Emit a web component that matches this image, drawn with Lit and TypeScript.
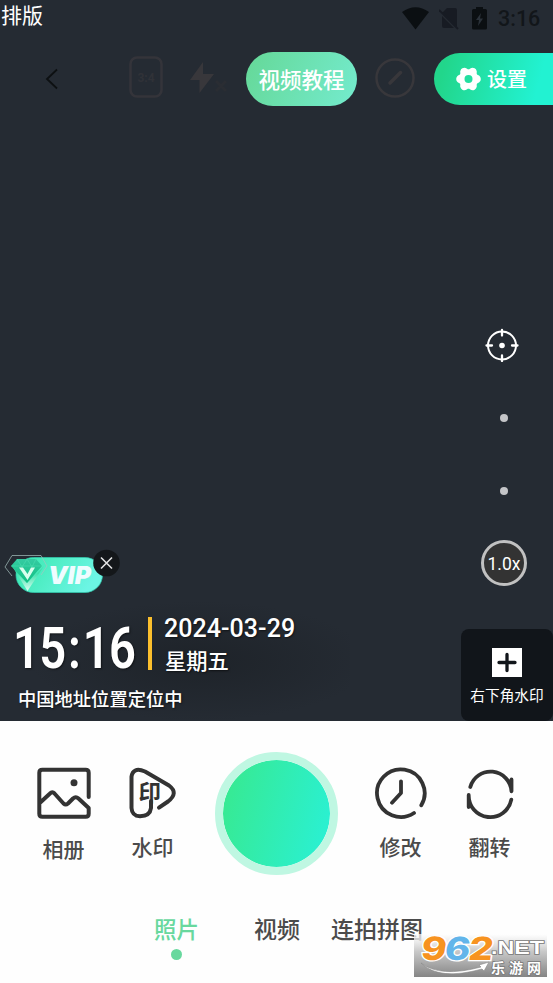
import { LitElement, html, css, svg } from "lit";
import { customElement } from "lit/decorators.js";

@customElement("status-bar")
class StatusBar extends LitElement {
  static styles = css`
    :host { display: flex; height: 52px; flex: none; box-sizing: border-box; align-items: flex-start; }
    .title { font-size: 21px; line-height: 30px; color: #fff; flex: 1; margin-top: -1px; padding-left: 1px; }
    .icons { display: flex; padding: 7px 0 0; }
    .wifi { margin-right: 10px; }
    .sim { margin-right: 13px; }
    .time { font: 500 21.5px/24px Roboto, sans-serif; color: #12161a; margin-left: 11px; width: 55px; }
  `;
  render() {
    return html`
      <div class="title">排版</div>
      <div class="icons">
        <svg class="wifi" width="27" height="23" viewBox="0 0 27 23"><path d="M0 5Q13.500-4.500 27 5L13.500 22.500Z" fill="#0b0f12" /></svg>
        <svg class="sim" width="20" height="23" viewBox="0 0 20 23">
          <path d="M3 6L8 1H16Q18 1 18 3V20L3 5ZM3 9L15 21H5Q3 21 3 19Z" fill="#171b23" />
          <path d="M0 3L19 22" stroke="#171b23" stroke-width="1.800" />
        </svg>
        <svg width="15" height="23" viewBox="0 0 15 23">
          <path d="M4 2V0H11V2H13.500Q15 2 15 3.500V21Q15 22.500 13.500 22.500H1.500Q0 22.500 0 21V3.500Q0 2 1.500 2Z" fill="#0b0f12" />
          <path d="M9 6L4 13H7L6 19L11 11.500H8Z" fill="#2b323a" />
        </svg>
        <div class="time">3:16</div>
      </div>
    `;
  }
}

@customElement("tool-bar")
class ToolBar extends LitElement {
  static styles = css`
    :host { display: flex; height: 54px; flex: none; align-items: center; }
    svg { flex: none; }
    .back { margin-left: 45px; }
    .ratio { margin: 0 0 4px 71px; }
    .flash { margin: 0 0 2px 27px; }
    .tutorial { flex: none; margin-left: 17px; width: 111px; height: 54px; border-radius: 27px; background: linear-gradient(115deg, #65d897, #74ebce); color: #fff; font-weight: 500; font-size: 21.500px; line-height: 54px; text-align: center; }
    .compass { margin: 0 0 3px 18px; }
    .settings { flex: none; margin-left: 19px; width: 119px; height: 52px; border-radius: 26px 0 0 26px; background: linear-gradient(105deg, #22d68b 10%, #22f2d2 85%); display: flex; align-items: center; color: #fff; font-size: 20px; font-weight: 500; line-height: 52px; }
    .gear { margin: 0 6px 0 22px; }
  `;
  render() {
    const petals = [0, 60, 120, 180, 240, 300];
    return html`
      <svg class="back" width="13" height="22" viewBox="0 0 13 22"><path d="M12 1.500L2 11L12 20.500" fill="none" stroke="#0d1012" stroke-width="1.800" /></svg>
      <svg class="ratio" width="34" height="42" viewBox="0 0 34 42">
        <rect x="1.500" y="1.500" width="31" height="39" rx="6.500" fill="none" stroke="#34343a" stroke-width="2.600" />
        <text x="17" y="26" text-anchor="middle" font-family="Roboto" font-weight="700" font-size="12" fill="#303238">3:4</text>
      </svg>
      <svg class="flash" width="39" height="32" viewBox="0 0 39 32">
        <path d="M13 0L0 18H9.500V31L24 12H13Z" fill="#38373b" />
        <path d="M26 19L36 29M36 19L26 29" stroke="#2a2d33" stroke-width="3" />
      </svg>
      <div class="tutorial">视频教程</div>
      <svg class="compass" width="40" height="40" viewBox="0 0 40 40">
        <circle cx="20" cy="20" r="18.500" fill="none" stroke="#38373b" stroke-width="2.500" />
        <path d="M15 25L25.500 14.500" stroke="#38373b" stroke-width="3.500" stroke-linecap="round" />
      </svg>
      <div class="settings">
        <svg class="gear" width="25" height="24" viewBox="-12.500 -12 25 24">
          <g fill="#fff">
            <circle r="9.800" />
            ${petals.map((a) => svg`<circle cx="8" r="4.300" transform=${`rotate(${a})`} />`)}
          </g>
          <circle r="4" fill="#22dfa0" />
        </svg>
        <span>设置</span>
      </div>
    `;
  }
}

@customElement("vip-badge")
class VipBadge extends LitElement {
  static styles = css`:host { display: block; height: 46px; } svg { display: block; }`;
  render() {
    return html`
      <svg width="122" height="46" viewBox="0 0 122 46">
        <defs>
          <linearGradient id="pill" x2="1" y2="0.300"><stop offset="0" stop-color="#38e8ac" /><stop offset="1" stop-color="#6cf5e4" /></linearGradient>
          <linearGradient id="gem" x2="0" y2="1"><stop offset="0" stop-color="#35cba2" /><stop offset="1" stop-color="#0fc082" /></linearGradient>
          <linearGradient id="tip" x2="0" y2="1"><stop offset="0.300" stop-color="#3fe0ac" /><stop offset="1" stop-color="#dcfff2" /></linearGradient>
        </defs>
        <rect x="16" y="8.500" width="86.500" height="35" rx="17.500" fill="url(#pill)" stroke="#31cdb0" stroke-width="0.700" />
        <path d="M12 17L27 34L44 17L27.500 42Z" fill="url(#tip)" />
        <path d="M17 10H36L42 17L27 34L11 17Z" fill="url(#gem)" />
        <path d="M17 10L22 18L27 10L32 18L36 10M11 17H42" stroke="#55e5b8" stroke-width="1" opacity="0.450" fill="none" />
        <path d="M12 6.500H41L47 17L41 26M12 6.500L5 18L12 27" stroke="#a8c3c0" stroke-width="0.700" fill="none" />
        <path d="M19 18.500H23L27.500 25L31 18.500H35L27.500 31Z" fill="#d8ffee" />
        <text x="48" y="34.500" font-family="Inter, sans-serif" font-size="24" font-weight="900" font-style="italic" textLength="43" lengthAdjust="spacingAndGlyphs" fill="#effcff">VIP</text>
        <circle cx="106.500" cy="14" r="13.300" fill="#14171a" />
        <path d="M101 8.500L112 19.500M112 8.500L101 19.500" stroke="#e3e3e3" stroke-width="1.600" />
      </svg>
    `;
  }
}

@customElement("time-mark")
class TimeMark extends LitElement {
  static styles = css`
    :host { display: block; color: #fff; text-shadow: 1px 1px 2px #0008; }
    .row { display: flex; height: 61px; }
    .bar { width: 4px; height: 53px; margin: 1px 12px 0 1px; background: #fbbf2d; }
    .date { font: 500 25px/26px Roboto, sans-serif; letter-spacing: 0.050px; }
    .day { font-size: 21.300px; line-height: 30px; padding: 3px 0 0 1px; font-weight: 500; }
    .place { font-size: 18.300px; line-height: 24px; padding: 9px 0 0 18px; font-weight: 500; }
    .clock { overflow: visible; }
  `;
  render() {
    return html`
      <div class="row">
        <svg class="clock" width="147" height="61" viewBox="0 0 147 61">
          <g transform="scale(0.820 1)" font-family="Roboto, sans-serif" font-size="57.500" font-weight="600" fill="#fff">
            <text x="16 48 83 101 133" y="51.500">15:16</text>
          </g>
        </svg>
        <div class="bar"></div>
        <div>
          <div class="date">2024-03-29</div>
          <div class="day">星期五</div>
        </div>
      </div>
      <div class="place">中国地址位置定位中</div>
    `;
  }
}

@customElement("side-tools")
class SideTools extends LitElement {
  static styles = css`
    :host { display: flex; flex-direction: column; align-items: flex-end; width: 92px; }
    svg { display: block; }
    .target { margin: 222px 34px 0 0; }
    .dot { width: 8px; height: 8px; border-radius: 50%; background: #c4c5c8; margin: 52px 45.500px 0 0; }
    .dot + .dot { margin-top: 65px; }
    .zoom { width: 40px; height: 40px; border: 3px solid #c1c1c1; border-radius: 50%; background: #333; color: #fff; font: 17.500px/42px Roboto, sans-serif; text-align: center; margin: 45px 26px 0 0; }
    .corner { width: 92px; height: 92px; margin-top: 43px; border-radius: 8px; background: #11151a; display: flex; flex-direction: column; align-items: center; color: #fff; font-size: 14.700px; line-height: 20px; }
    .plus { margin: 19px 0 8px; }
  `;
  render() {
    return html`
      <svg class="target" width="34" height="34" viewBox="0 0 34 34">
        <circle cx="17" cy="17.500" r="14" stroke="#fff" stroke-width="2" fill="none" />
        <path d="M17 2V7.500M17 27.500V33M1.500 17.500H7M27 17.500H32.500" stroke="#fff" stroke-width="2.300" stroke-linecap="round" />
        <circle cx="17" cy="17.500" r="2.800" fill="#fff" />
      </svg>
      <div class="dot"></div>
      <div class="dot"></div>
      <div class="zoom">1.0x</div>
      <div class="corner">
        <svg class="plus" width="30" height="29" viewBox="0 0 30 29">
          <rect width="30" height="29" fill="#fff" />
          <path d="M15 6.500V22.500M7 14.500H23" stroke="#11151a" stroke-width="3.300" stroke-linecap="round" />
        </svg>
        右下角水印
      </div>
    `;
  }
}

@customElement("site-logo")
class SiteLogo extends LitElement {
  static styles = css`:host { display: block; } svg { display: block; overflow: visible; }`;
  render() {
    return html`
      <svg width="133" height="43" viewBox="0 0 133 43">
        <defs>
          <linearGradient id="plate" x2="0" y2="1"><stop offset="0" stop-color="#fff" stop-opacity="0.700" /><stop offset="0.400" stop-color="#c9c9c9" /><stop offset="1" stop-color="#858585" /></linearGradient>
        </defs>
        <rect width="133" height="43" fill="url(#plate)" />
        <g transform="translate(6 26) skewX(-8) scale(1.200 1)" font-family="Inter, sans-serif" font-weight="800" font-size="32" fill="#f79320" stroke="#fff" stroke-width="2.500" paint-order="stroke">
          <text x="0" y="0">9</text>
          <text x="19.500" y="0" fill="#62b5ea">6</text>
          <text x="39.500" y="0">2</text>
        </g>
        <text x="77" y="20" font-family="Liberation Sans, sans-serif" font-weight="700" font-size="18" textLength="53" lengthAdjust="spacingAndGlyphs" fill="#fff" stroke="#777" stroke-width="1.500" paint-order="stroke">.NET</text>
        <path d="M7 29Q26 44 67 33L65 31L75 28L70 37L68 35Q25 47 7 29Z" fill="#fff" stroke="#888" stroke-width="0.600" />
        <text x="77" y="38.500" font-family="Noto Sans CJK SC, sans-serif" font-weight="700" font-size="14" textLength="50" fill="#fff" stroke="#777" stroke-width="1.500" paint-order="stroke">乐游网</text>
      </svg>
    `;
  }
}

@customElement("app-root")
class AppRoot extends LitElement {
  static styles = css`
    :host { display: flex; flex-direction: column; width: 553px; height: 983px; overflow: hidden; background: #fefefe; font-family: "Noto Sans CJK SC", sans-serif; }
    svg { display: block; }
    .camera { height: 721px; flex: none; background: #252b33; display: flex; flex-direction: column; }
    .view { flex: 1; display: flex; justify-content: space-between; }
    .left { display: flex; flex-direction: column; justify-content: flex-end; width: 350px; background: radial-gradient(ellipse 170px 60px at 200px 555px, #1e2329, #252b3300); }
    .gap { height: 21px; }
    .place-gap { height: 11px; }
    .actions { display: grid; grid-template-columns: 89px 89px 159px 89px 89px; padding: 31px 0 0 19px; height: 123px; }
    .action { display: flex; flex-direction: column; align-items: center; padding-top: 14px; font-size: 21px; line-height: 28px; color: #4b4b4b; font-weight: 500; }
    .action svg { margin-bottom: 12px; }
    .action.low svg { margin-bottom: 14px; }
    .shutter { width: 107px; height: 107px; border: 8px solid #bff7e2; border-radius: 50%; background: linear-gradient(105deg, #38e98d, #29f1d8) padding-box; justify-self: center; }
    .tabs { display: flex; padding: 36px 0 0 154px; font-size: 23px; line-height: 34px; color: #4b4b4b; font-weight: 500; height: 71px; }
    .tab { display: flex; flex-direction: column; align-items: center; }
    .tab.on { color: #68d89e; font-size: 22.500px; }
    .tab.on::after { content: ""; width: 11px; height: 11px; border-radius: 50%; background: #68d89e; margin-top: 4px; }
    .tab:nth-child(2) { margin-left: 55px; }
    .tab:nth-child(3) { margin-left: 31px; }
    .logo { position: absolute; left: 414px; top: 934px; }
  `;
  render() {
    return html`
      <div class="camera">
        <status-bar></status-bar>
        <tool-bar></tool-bar>
        <div class="view">
          <div class="left">
            <vip-badge></vip-badge>
            <div class="gap"></div>
            <time-mark></time-mark>
            <div class="place-gap"></div>
          </div>
          <side-tools></side-tools>
        </div>
      </div>
      <div class="actions">
        <div class="action low">
          <svg width="56" height="54" viewBox="-1 -1 56 54" fill="none" stroke="#333" stroke-width="4" stroke-linecap="round" stroke-linejoin="round">
            <path d="M51.700 30V5.700Q51.700 2.700 48.700 2.700H5.300Q2.300 2.700 2.300 5.700V46.700Q2.300 49.700 5.300 49.700H48.700Q51.700 49.700 51.700 46.700V41L41.500 31.500Q38.700 29 36 31.500L31 36.500Q28.700 38.500 26.500 36.500L17.500 26.500Q15.300 24.200 13 26.500L3 35.700" />
            <circle cx="37" cy="15.700" r="3.500" fill="#333" stroke="none" />
          </svg>
          相册
        </div>
        <div class="action">
          <svg width="48" height="54" viewBox="0 -1 48 54" fill="none" stroke="#333" stroke-width="4" stroke-linecap="round" stroke-linejoin="round">
            <path d="M30 40.700L39 34.500Q50 26 40 18.500L16 4.500Q4 -0.500 2.500 9.700V41Q3 49 11 49.300Q21 49 22 41V34" />
            <text x="9.500" y="34" font-family="Noto Sans CJK SC, sans-serif" font-size="22.500" font-weight="700" fill="#333" stroke="none">印</text>
          </svg>
          水印
        </div>
        <div class="shutter"></div>
        <div class="action">
          <svg width="54" height="54" viewBox="-27 -27 54 54" fill="none" stroke="#333" stroke-width="3.800" stroke-linecap="round" stroke-linejoin="round">
            <path d="M20.300 12.300A23.800 23.800 0 1 0 13 20M0 -11.700V0L-9 9.700" />
          </svg>
          修改
        </div>
        <div class="action">
          <svg width="54" height="54" viewBox="-27 -27 54 54" fill="none" stroke="#333" stroke-width="3.800" stroke-linecap="round" stroke-linejoin="round">
            <path d="M-19.700 -6A21 21 0 0 1 21.500 -1.700V-13.500L19.800 -10M21.300 6.700A21.500 21.500 0 0 1 -21.300 2V14L-19.800 10.500" />
          </svg>
          翻转
        </div>
      </div>
      <div class="tabs">
        <div class="tab on">照片</div>
        <div class="tab">视频</div>
        <div class="tab">连拍拼图</div>
      </div>
      <site-logo class="logo"></site-logo>
    `;
  }
}
